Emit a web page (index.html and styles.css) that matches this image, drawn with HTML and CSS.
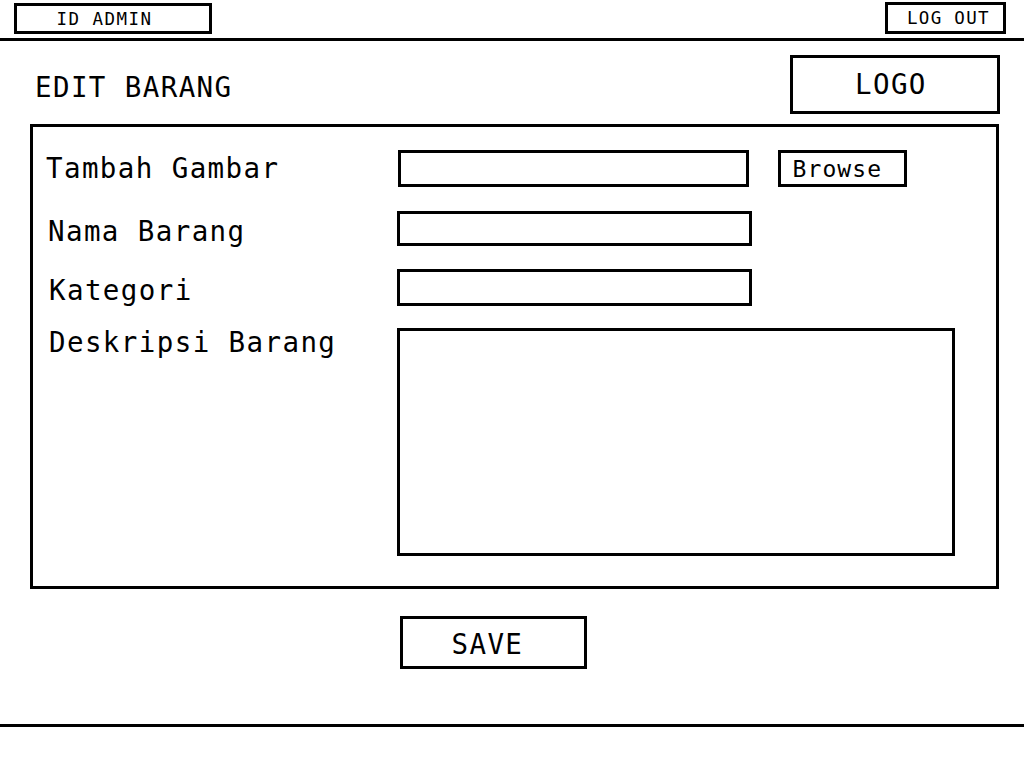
FILE: index.html
```html
<!DOCTYPE html>
<html lang="id">
<head>
<meta charset="utf-8">
<title>Edit Barang</title>
<link rel="stylesheet" href="styles.css">
</head>
<body>
<header class="topbar">
  <div class="box admin">ID ADMIN</div>
  <button class="box logout">LOG OUT</button>
</header>
<main class="content">
  <div class="heading">
    <h1 class="title">EDIT BARANG</h1>
    <div class="box logo">LOGO</div>
  </div>
  <form class="panel">
    <div class="row row-image">
      <label class="label" for="gambar">Tambah Gambar</label>
      <input class="box field" id="gambar" type="text">
      <button class="box browse" type="button">Browse</button>
    </div>
    <div class="row row-name">
      <label class="label" for="nama">Nama Barang</label>
      <input class="box field" id="nama" type="text">
    </div>
    <div class="row row-category">
      <label class="label" for="kategori">Kategori</label>
      <input class="box field" id="kategori" type="text">
    </div>
    <div class="row row-description">
      <label class="label" for="deskripsi">Deskripsi Barang</label>
      <textarea class="box field" id="deskripsi"></textarea>
    </div>
  </form>
  <button class="box save">SAVE</button>
</main>
<footer class="footer"></footer>
</body>
</html>
```
FILE: styles.css
```css
* {
  box-sizing: border-box;
}

body {
  margin: 0;
  height: 768px;
  display: flex;
  flex-direction: column;
  background: #fff;
  color: #000;
  font: 27.5px/32px "DejaVu Sans Mono", monospace;
  letter-spacing: 1.4px;
  overflow: hidden;
}

.box {
  display: block;
  margin: 0;
  padding: 0;
  border: 3px solid #000;
  border-radius: 0;
  background: #fff;
  color: inherit;
  font: inherit;
  letter-spacing: inherit;
  text-align: left;
  white-space: nowrap;
  resize: none;
  outline: none;
}

.topbar {
  display: flex;
  justify-content: space-between;
  height: 41px;
  padding: 2px 18px 0 14px;
  border-bottom: 3px solid #000;
  font-size: 17.5px;
  line-height: 24px;
}

.admin {
  width: 198px;
  height: 31px;
  margin-top: 1px;
  padding: 1px 0 0 39.5px;
  letter-spacing: 1.46px;
}

.logout {
  width: 121px;
  height: 32px;
  padding-left: 19px;
  letter-spacing: 1.3px;
}

.content {
  height: 683px;
  padding: 14px 24px 0 30px;
}

.heading {
  display: flex;
  justify-content: space-between;
  height: 69px;
}

.title {
  margin: 0;
  padding: 16px 0 0 5px;
  font: inherit;
}

.logo {
  width: 210px;
  height: 59px;
  padding: 10px 0 0 62px;
}

.panel {
  width: 969px;
  height: 465px;
  padding: 23px 0 0 13px;
  border: 3px solid #000;
}

.row {
  display: flex;
}

.label {
  width: 351px;
  white-space: nowrap;
}

.row-image {
  height: 61px;
}

.row-image .label {
  width: 352px;
  padding-top: 2px;
}

.row-image .field {
  width: 351px;
  height: 37px;
}

.browse {
  width: 129px;
  height: 37px;
  margin-left: 29px;
  padding: 2px 0 0 11.5px;
  font-size: 23px;
  line-height: 29px;
  letter-spacing: 1.1px;
}

.row-name {
  height: 58px;
}

.row-name .label {
  padding: 4px 0 0 2px;
}

.row-name .field {
  width: 355px;
  height: 35px;
}

.row-category {
  height: 59px;
}

.row-category .label {
  padding: 5px 0 0 3px;
}

.row-category .field {
  width: 355px;
  height: 37px;
}

.row-description .label {
  padding: 0 0 0 3px;
  margin-top: -2px;
}

.row-description .field {
  width: 558px;
  height: 228px;
}

.save {
  width: 187px;
  height: 53px;
  margin: 27px 0 0 370px;
  padding: 2px 0 0 48.5px;
}

.footer {
  flex: 1;
  border-top: 3px solid #000;
}
```
